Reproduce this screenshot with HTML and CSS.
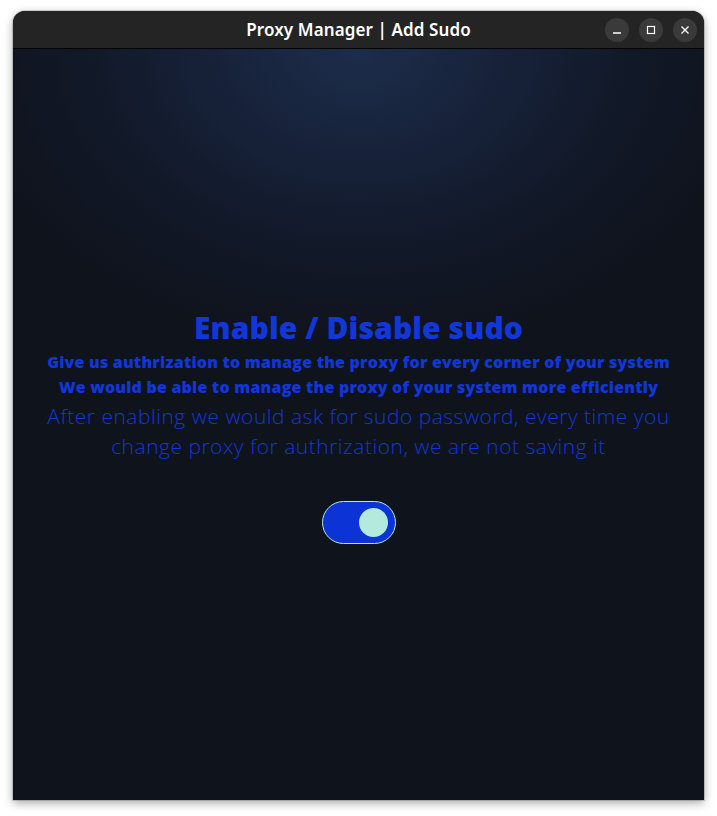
FILE: index.html
```html
<!DOCTYPE html>
<html>
<head>
<meta charset="utf-8">
<link rel="stylesheet" href="styles.css">
</head>
<body>
<div class="window">
  <div class="titlebar">
    <div class="title">Proxy Manager | Add Sudo</div>
    <div class="controls">
      <span class="btn"><svg width="10" height="10" viewBox="0 0 10 10"><path d="M1 8h8" stroke="#fff" stroke-width="1.3"/></svg></span>
      <span class="btn"><svg width="10" height="10" viewBox="0 0 10 10"><rect x="1.5" y="1.5" width="7" height="7" fill="none" stroke="#fff" stroke-width="1.2"/></svg></span>
      <span class="btn"><svg width="10" height="10" viewBox="0 0 10 10"><path d="M1.5 1.5l7 7M8.5 1.5l-7 7" stroke="#fff" stroke-width="1.3"/></svg></span>
    </div>
  </div>
  <div class="content">
    <div class="panel">
      <h1 class="heading">Enable / Disable sudo</h1>
      <p class="sub">Give us authrization to manage the proxy for every corner of your system</p>
      <p class="sub">We would be able to manage the proxy of your system more efficiently</p>
      <p class="desc">After enabling we would ask for sudo password, every time you change proxy for authrization, we are not saving it</p>
      <div class="toggle"><span class="knob"></span></div>
    </div>
  </div>
</div>
</body>
</html>
```

FILE: styles.css
```css
* { box-sizing: border-box; }
html, body { margin: 0; padding: 0; background: #ffffff; }
body { padding: 11px 13px 16px 13px; height: 816px; }
.window {
  width: 691px;
  height: 789px;
  border-radius: 12px 12px 0 0;
  overflow: hidden;
  display: flex;
  flex-direction: column;
  box-shadow: 0 3px 10px rgba(0,0,0,0.35), 0 0 0 1px rgba(0,0,0,0.15);
  background: #0f131c;
}
.titlebar {
  height: 38px;
  background: #242424;
  border-bottom: 1px solid #050505;
  position: relative;
  display: flex;
  align-items: center;
  justify-content: center;
  flex: none;
}
.title {
  color: #ffffff;
  font-family: "Noto Sans", "DejaVu Sans", sans-serif;
  font-weight: 600;
  font-size: 17px;
  letter-spacing: 0.1px;
}
.controls {
  position: absolute;
  right: 7px;
  top: 7px;
  display: flex;
  gap: 10px;
}
.btn {
  width: 24px;
  height: 24px;
  border-radius: 50%;
  background: #3a3a3a;
  display: flex;
  align-items: center;
  justify-content: center;
}
.content {
  flex: 1;
  background: radial-gradient(ellipse 400px 300px at 50% 0%, #1c2d4a 0%, #17223a 35%, #111827 70%, #0f131c 100%), #0f131c;
  display: flex;
  flex-direction: column;
  align-items: center;
  padding-top: 261px;
}
.panel {
  display: flex;
  flex-direction: column;
  align-items: center;
  text-align: center;
  color: #1237d8;
  font-family: "Open Sans", "Noto Sans", sans-serif;
  width: 640px;
}
.heading {
  margin: 0 0 4px 0;
  font-size: 30px;
  font-weight: 800;
  line-height: 36px;
  letter-spacing: 0.1px;
}
.sub {
  margin: 0;
  font-size: 16px;
  font-weight: 800;
  line-height: 25px;
  letter-spacing: 0.2px;
}
.desc {
  margin: 1px 0 0 0;
  font-size: 21px;
  font-weight: 300;
  line-height: 30px;
  letter-spacing: 0.5px;
  max-width: 630px;
}
.toggle {
  margin-top: 40px;
  width: 74px;
  height: 43px;
  border-radius: 22px;
  background: #0c33d6;
  border: 1px solid #b3e8dc;
  display: flex;
  align-items: center;
  justify-content: flex-end;
  padding-right: 7px;
}
.knob {
  width: 29px;
  height: 29px;
  border-radius: 50%;
  background: #b4eadc;
}
```
